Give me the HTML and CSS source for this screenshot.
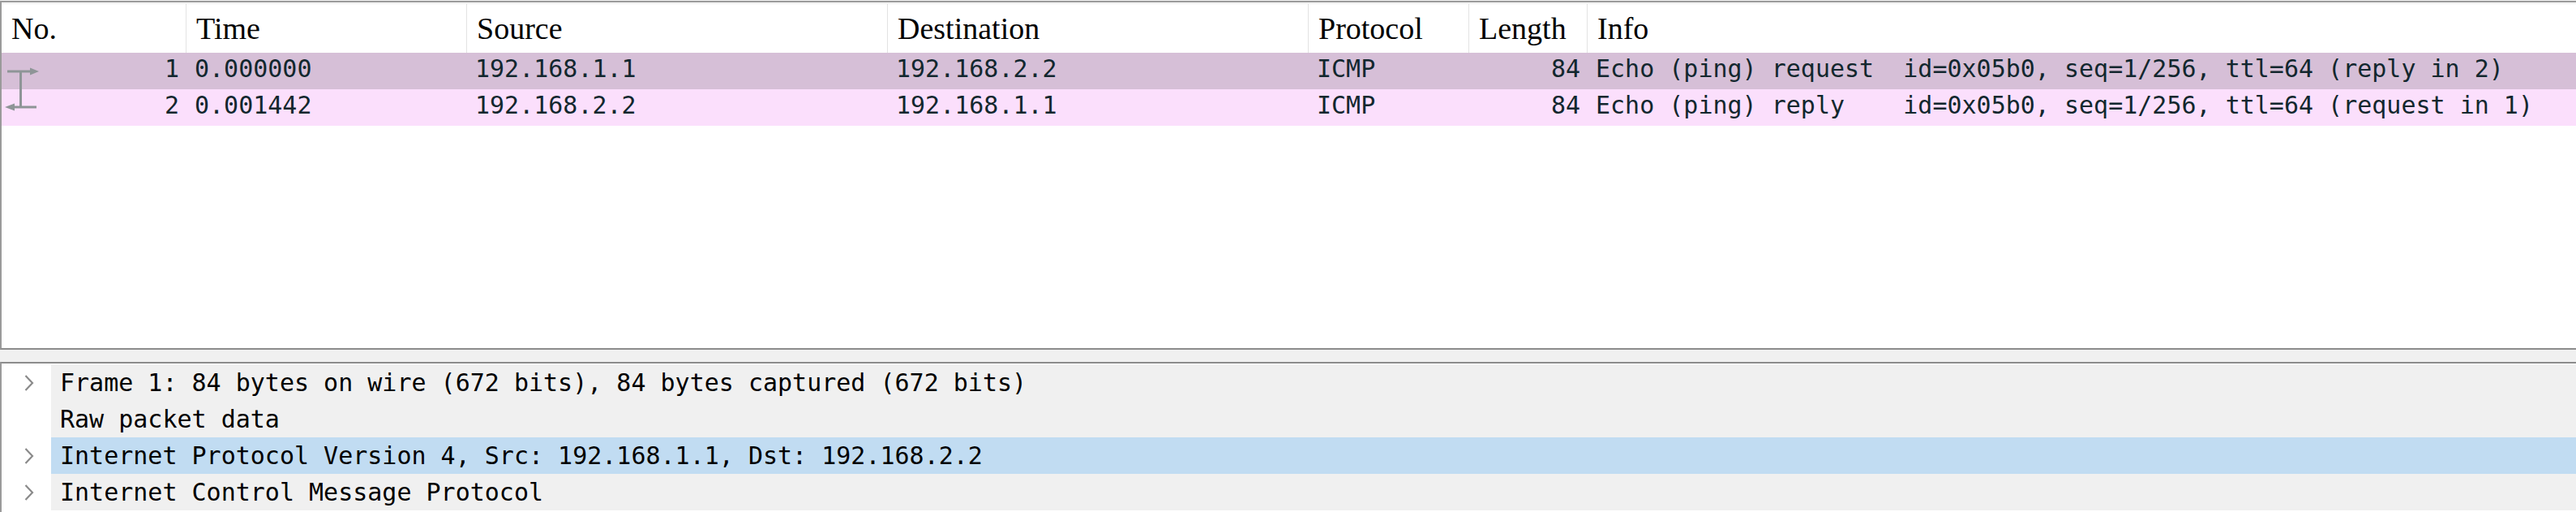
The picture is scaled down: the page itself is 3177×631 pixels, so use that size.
FILE: index.html
```html
<!DOCTYPE html>
<html>
<head>
<meta charset="utf-8">
<title>Wireshark</title>
<link rel="stylesheet" href="styles.css">
</head>
<body>
<div class="packet-list">
  <div class="plist-header">
    <div class="hcell">No.</div>
    <div class="hcell">Time</div>
    <div class="hcell">Source</div>
    <div class="hcell">Destination</div>
    <div class="hcell">Protocol</div>
    <div class="hcell">Length</div>
    <div class="hcell last">Info</div>
  </div>
  <div class="prow sel">
    <div class="cell no">
      <svg class="rel" width="50" height="45" viewBox="0 0 50 45">
        <line x1="7" y1="23" x2="37" y2="23" stroke="#8e9597" stroke-width="3"/>
        <polygon points="35,18.5 46,23 35,27.5" fill="#8e9597"/>
        <line x1="23.5" y1="23" x2="23.5" y2="45" stroke="#8e9597" stroke-width="3"/>
      </svg>
      <span class="num">1</span>
    </div>
    <div class="cell">0.000000</div>
    <div class="cell">192.168.1.1</div>
    <div class="cell">192.168.2.2</div>
    <div class="cell">ICMP</div>
    <div class="cell right">84</div>
    <div class="cell info">Echo (ping) request  id=0x05b0, seq=1/256, ttl=64 (reply in 2)</div>
  </div>
  <div class="prow icmp">
    <div class="cell no">
      <svg class="rel" width="50" height="45" viewBox="0 0 50 45">
        <line x1="23.5" y1="0" x2="23.5" y2="22" stroke="#8e9597" stroke-width="3"/>
        <line x1="14" y1="22" x2="43" y2="22" stroke="#8e9597" stroke-width="3"/>
        <polygon points="16,17.5 4,22 16,26.5" fill="#8e9597"/>
      </svg>
      <span class="num">2</span>
    </div>
    <div class="cell">0.001442</div>
    <div class="cell">192.168.2.2</div>
    <div class="cell">192.168.1.1</div>
    <div class="cell">ICMP</div>
    <div class="cell right">84</div>
    <div class="cell info">Echo (ping) reply    id=0x05b0, seq=1/256, ttl=64 (request in 1)</div>
  </div>
</div>
<div class="splitter"></div>
<div class="tree">
  <div class="trow">
    <div class="gutter"><svg class="chev" width="14" height="22" viewBox="0 0 14 22"><polyline points="2.5,2 11,11 2.5,20" fill="none" stroke="#8a8a8a" stroke-width="2.2"/></svg></div>
    <div class="tcell">Frame 1: 84 bytes on wire (672 bits), 84 bytes captured (672 bits)</div>
  </div>
  <div class="trow">
    <div class="gutter"></div>
    <div class="tcell">Raw packet data</div>
  </div>
  <div class="trow selected">
    <div class="gutter"><svg class="chev" width="14" height="22" viewBox="0 0 14 22"><polyline points="2.5,2 11,11 2.5,20" fill="none" stroke="#8a8a8a" stroke-width="2.2"/></svg></div>
    <div class="tcell">Internet Protocol Version 4, Src: 192.168.1.1, Dst: 192.168.2.2</div>
  </div>
  <div class="trow">
    <div class="gutter"><svg class="chev" width="14" height="22" viewBox="0 0 14 22"><polyline points="2.5,2 11,11 2.5,20" fill="none" stroke="#8a8a8a" stroke-width="2.2"/></svg></div>
    <div class="tcell">Internet Control Message Protocol</div>
  </div>
</div>
</body>
</html>
```

FILE: styles.css
```css
html, body {
  margin: 0;
  padding: 0;
}
body {
  background: #f0f0f0;
  width: 3177px;
  height: 631px;
  overflow: hidden;
}
.packet-list {
  margin-top: 1px;
  height: 426px;
  background: #ffffff;
  border-top: 2px solid #9a9a9a;
  border-left: 2px solid #9a9a9a;
  border-bottom: 2px solid #8c8c8c;
  overflow: hidden;
}
.plist-header,
.prow {
  display: grid;
  grid-template-columns: 228px 346px 519px 519px 198px 146px 1fr;
}
.plist-header {
  margin-top: 1px;
  border-top: 1px solid #ececec;
  height: 60px;
}
.hcell {
  box-sizing: border-box;
  border-right: 1px solid #e3e3e3;
  padding-left: 12px;
  font-family: "Liberation Serif", serif;
  font-size: 38px;
  line-height: 60px;
  color: #000000;
  white-space: nowrap;
}
.hcell.last {
  border-right: none;
}
.prow {
  height: 45px;
  font-family: "DejaVu Sans Mono", monospace;
  font-size: 30px;
  line-height: 39px;
  color: #12272e;
}
.prow.sel {
  background: #d6bfd7;
}
.prow.icmp {
  background: #fbdffc;
}
.cell {
  padding-left: 10px;
  white-space: pre;
  overflow: hidden;
}
.cell.right {
  text-align: right;
  padding-left: 0;
  padding-right: 9px;
}
.cell.no {
  display: flex;
  padding-left: 0;
  padding-right: 9px;
}
.rel {
  display: block;
  flex: none;
}
.num {
  margin-left: auto;
}
.splitter {
  height: 15px;
}
.tree {
  background: #ffffff;
  border-top: 2px solid #8c8c8c;
  border-left: 2px solid #9a9a9a;
  padding-top: 1px;
  height: 182px;
}
.trow {
  display: grid;
  grid-template-columns: 61px 1fr;
  height: 45px;
}
.gutter {
  display: flex;
  align-items: center;
  padding-left: 27px;
}
.chev {
  display: block;
}
.tcell {
  background: #f0f0f0;
  padding-left: 11px;
  font-family: "DejaVu Sans Mono", monospace;
  font-size: 30px;
  line-height: 45px;
  color: #000000;
  white-space: pre;
}
.trow.selected .tcell {
  background: #c1dcf2;
}
```
